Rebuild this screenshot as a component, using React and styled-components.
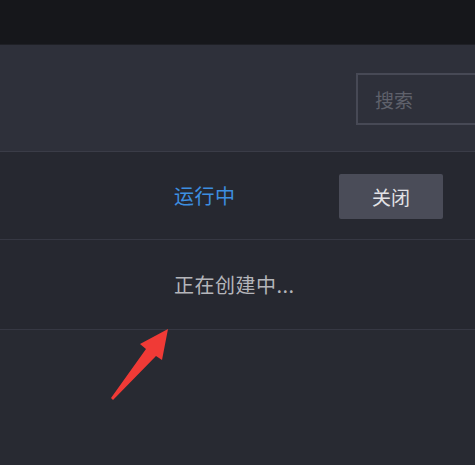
import React from 'react'
import styled, { createGlobalStyle } from 'styled-components'

const GlobalStyle = createGlobalStyle`
html, body {
    margin: 0;
    padding: 0;
    background: #282a32;
}
body {
    font-family: "Noto Sans CJK SC", "Liberation Sans", sans-serif;
}
`

const Page = styled.div`
width: 475px;
height: 465px;
overflow: hidden;
position: relative;
background: #282a32;
display: flex;
flex-direction: column;
`

const TopBar = styled.div`
height: 45px;
background: #16171b;
border-bottom: 1px solid #1f2026;
box-sizing: border-box;
`

const Toolbar = styled.div`
height: 107px;
background: #2e303a;
border-bottom: 1px solid #3a3c47;
box-sizing: border-box;
display: flex;
align-items: center;
justify-content: flex-end;
padding-top: 2px;
`

const Search = styled.input`
width: 140px;
height: 52px;
margin-right: -21px;
box-sizing: border-box;
background: #2e303a;
border: 2px solid #474955;
color: #ccc;
font-family: "Noto Sans CJK SC", sans-serif;
font-size: 19px;
padding: 0 0 0 17px;
outline: none;
&::placeholder {
    color: #5f616b;
}
`

const Row = styled.div`
height: ${p => p.$h}px;
background: #262830;
border-bottom: 1px solid #363843;
box-sizing: border-box;
display: flex;
align-items: center;
padding-left: 174px;
`

const Status = styled.span`
width: 165px;
font-size: 20px;
color: ${p => p.$color};
letter-spacing: 0.5px;
`

const Button = styled.button`
width: 104px;
height: 45px;
background: #4a4c58;
border: none;
border-radius: 2px;
color: #e2e2e6;
font-family: "Noto Sans CJK SC", sans-serif;
font-size: 19px;
padding: 0;
margin-top: 2px;
`

const Arrow = styled.svg`
position: absolute;
left: 0;
top: 0;
pointer-events: none;
`

const App = () => {
    return (
        <Page>
            <GlobalStyle />
            <TopBar />
            <Toolbar>
                <Search placeholder="搜索" />
            </Toolbar>
            <Row $h={88}>
                <Status $color="#3d8fe0">运行中</Status>
                <Button>关闭</Button>
            </Row>
            <Row $h={90}>
                <Status $color="#b4b5ba">正在创建中...</Status>
            </Row>
            <Arrow width="475" height="465" viewBox="0 0 475 465">
                <polygon
                    points="168,329 162,360 156,356 113,400 111,398 146,349 140,344"
                    fill="#f03a36"
                />
            </Arrow>
        </Page>
    )
}

export default App
